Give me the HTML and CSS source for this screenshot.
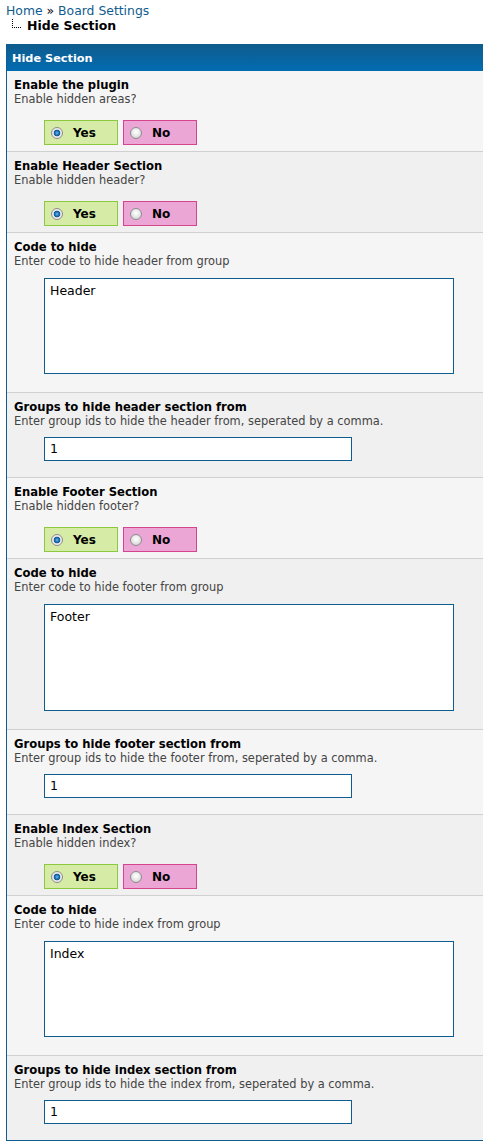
FILE: index.html
```html
<!DOCTYPE html>
<html>
<head>
<meta charset="utf-8">
<link rel="stylesheet" href="styles.css">
</head>
<body>
<div class="nav">
  <div class="crumbs"><a href="#">Home</a> » <a href="#">Board Settings</a></div>
  <div class="current"><span class="tree"></span><b>Hide Section</b></div>
</div>
<div class="box">
  <div class="head">Hide Section</div>

  <div class="row light">
    <div class="title">Enable the plugin</div>
    <div class="desc">Enable hidden areas?</div>
    <div class="choice"><span class="opt yes"><span class="radio on"></span>Yes</span><span class="opt no"><span class="radio"></span>No</span></div>
  </div>

  <div class="row dark">
    <div class="title">Enable Header Section</div>
    <div class="desc">Enable hidden header?</div>
    <div class="choice"><span class="opt yes"><span class="radio on"></span>Yes</span><span class="opt no"><span class="radio"></span>No</span></div>
  </div>

  <div class="row light">
    <div class="title">Code to hide</div>
    <div class="desc">Enter code to hide header from group</div>
    <div class="area">Header</div>
  </div>

  <div class="row dark">
    <div class="title">Groups to hide header section from</div>
    <div class="desc">Enter group ids to hide the header from, seperated by a comma.</div>
    <div class="text">1</div>
  </div>

  <div class="row light">
    <div class="title">Enable Footer Section</div>
    <div class="desc">Enable hidden footer?</div>
    <div class="choice"><span class="opt yes"><span class="radio on"></span>Yes</span><span class="opt no"><span class="radio"></span>No</span></div>
  </div>

  <div class="row dark">
    <div class="title">Code to hide</div>
    <div class="desc">Enter code to hide footer from group</div>
    <div class="area tall">Footer</div>
  </div>

  <div class="row light">
    <div class="title">Groups to hide footer section from</div>
    <div class="desc">Enter group ids to hide the footer from, seperated by a comma.</div>
    <div class="text">1</div>
  </div>

  <div class="row dark">
    <div class="title">Enable Index Section</div>
    <div class="desc">Enable hidden index?</div>
    <div class="choice"><span class="opt yes"><span class="radio on"></span>Yes</span><span class="opt no"><span class="radio"></span>No</span></div>
  </div>

  <div class="row light">
    <div class="title">Code to hide</div>
    <div class="desc">Enter code to hide index from group</div>
    <div class="area">Index</div>
  </div>

  <div class="row dark last">
    <div class="title">Groups to hide index section from</div>
    <div class="desc">Enter group ids to hide the index from, seperated by a comma.</div>
    <div class="text">1</div>
  </div>
</div>
</body>
</html>
```
FILE: styles.css
```css
html, body { margin: 0; padding: 0; background: #fff; overflow-x: hidden; }
body { font-family: "DejaVu Sans", Verdana, sans-serif; color: #000; padding-left: 6px; }

.nav { height: 44px; }
.crumbs { font-size: 12.4px; line-height: 14px; padding-top: 4px; color: #000; }
.crumbs a { color: #0f5c8e; text-decoration: none; }
.current { display: flex; align-items: flex-start; font-size: 12.5px; line-height: 15px; }
.tree { width: 8px; height: 8px; margin: 1px 6px 0 6px; border-left: 1px dotted #000; border-bottom: 1px dotted #000; }

.box { border: 1px solid #0f5c8e; margin-right: -20px; }
.head { height: 26px; background: linear-gradient(#0f5c8e, #026cb1); color: #fff; font-weight: bold; font-size: 11.3px; line-height: 27px; padding-left: 5px; }

.row { padding: 7px 7px 6px; border-bottom: 1px solid #d0d0d0; }
.row.last { border-bottom: 0; }
.light { background: #f5f5f5; }
.dark { background: #f0f0f0; }

.title { font-weight: bold; font-size: 11.6px; line-height: 14px; }
.desc { font-size: 11.4px; line-height: 14px; color: #444; }

.choice { display: flex; gap: 5px; margin: 14px 0 0 30px; }
.opt { box-sizing: border-box; width: 74px; height: 25px; display: flex; align-items: center; padding-left: 6px; font-weight: bold; font-size: 12px; }
.yes { background: #d6eca6; border: 1px solid #8dc93e; }
.no { background: #eca6d6; border: 1px solid #d5458e; }
.radio { box-sizing: border-box; width: 12px; height: 12px; border-radius: 50%; border: 1px solid #8c8c8c; margin-right: 10px; background: radial-gradient(circle at 50% 40%, #ffffff 0, #f0f0f0 35%, #c8c8c8 100%); }
.radio.on { background: radial-gradient(circle at 50% 50%, #6cc0f5 0, #2a82c8 1.5px, #104f86 3.2px, #e6e6e6 3.6px, #fafafa 100%); }

.area, .text { box-sizing: border-box; background: #fff; border: 1px solid #0f5c8e; margin-left: 30px; font-size: 12.5px; line-height: 15px; padding: 4px 5px; }
.area { width: 410px; height: 96px; margin-top: 10px; margin-bottom: 12px; }
.area.tall { height: 107px; }
.text { width: 308px; height: 24px; margin-top: 9px; margin-bottom: 10px; padding-top: 3px; }
```
